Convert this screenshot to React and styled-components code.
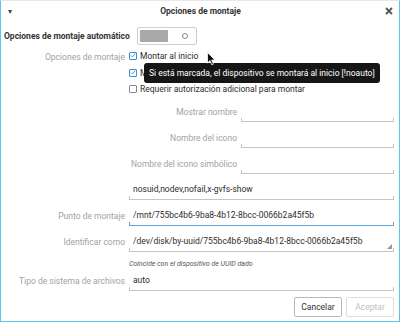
import React from "react";
import styled, { createGlobalStyle } from "styled-components";

const Global = createGlobalStyle`
  html, body { margin: 0; padding: 0; background: #fff; }
  body { font-family: Roboto, "Noto Sans", sans-serif; }
  * { box-sizing: border-box; }
`;

function CheckBox({ checked }) {
  return (
    <Box $checked={checked}>
      {checked && (
        <svg width="9" height="9" viewBox="0 0 9 9">
          <path d="M1.5 4.5 L3.7 6.7 L8 1.5" fill="none" stroke="#3d8fd8" strokeWidth="1.4" />
        </svg>
      )}
    </Box>
  );
}

function Entry({ value, focused, handle }) {
  return (
    <EntryBox $focused={focused}>
      <EntryText>{value}</EntryText>
      {handle && (
        <Handle width="5" height="5" viewBox="0 0 5 5">
          <path d="M5 0 L5 5 L0 5 Z" fill="#999" />
        </Handle>
      )}
    </EntryBox>
  );
}

function App() {
  return (
    <>
      <Global />
      <Window>
        <TitleBar>
          <Menu>▾</Menu>
          <Title>Opciones de montaje</Title>
          <Close>
            <svg width="8" height="8" viewBox="0 0 8 8">
              <path d="M1 1 L7 7 M7 1 L1 7" stroke="#555" strokeWidth="1.8" />
            </svg>
          </Close>
        </TitleBar>
        <Content>
          <Header>
            <HeaderLabel>Opciones de montaje automático</HeaderLabel>
            <Switch>
              <SwitchFill />
              <SwitchKnob />
            </Switch>
          </Header>

          <Form>
            <Label $top>Opciones de montaje</Label>
            <Checks>
              <CheckRow>
                <CheckBox checked />
                <span>Montar al inicio</span>
              </CheckRow>
              <CheckRow>
                <CheckBox checked />
                <span>Mostrar en la interfaz de usuario</span>
              </CheckRow>
              <CheckRow>
                <CheckBox />
                <span>Requerir autorización adicional para montar</span>
              </CheckRow>
            </Checks>

            <span />
            <SubForm>
              <Label>Mostrar nombre</Label>
              <Entry />
              <Label>Nombre del icono</Label>
              <Entry />
              <Label>Nombre del icono simbólico</Label>
              <Entry />
            </SubForm>

            <span />
            <Entry value="nosuid,nodev,nofail,x-gvfs-show" />

            <Label>Punto de montaje</Label>
            <Entry value="/mnt/755bc4b6-9ba8-4b12-8bcc-0066b2a45f5b" focused />

            <Label>Identificar como</Label>
            <Entry value="/dev/disk/by-uuid/755bc4b6-9ba8-4b12-8bcc-0066b2a45f5b" handle />

            <span />
            <Hint>Coincide con el dispositivo de UUID dado</Hint>

            <Label>Tipo de sistema de archivos</Label>
            <Entry value="auto" />
          </Form>

          <Buttons>
            <Button>Cancelar</Button>
            <Button disabled>Aceptar</Button>
          </Buttons>
        </Content>

        <Tooltip>Si está marcada, el dispositivo se montará al inicio [!noauto]</Tooltip>
        <Cursor width="9" height="14" viewBox="0 0 9 14">
          <path d="M0.5 0.5 L0.5 11 L3 8.6 L4.8 12.8 L6.4 12.1 L4.7 8 L8 8 Z" fill="#111" stroke="#fff" strokeWidth="0.8" />
        </Cursor>
      </Window>
    </>
  );
}

export default App;

const Window = styled.div`
  position: relative;
  width: 400px;
  height: 322px;
  border: 1px solid #5ec6ee;
  border-top-color: #e8e8e8;
  background: #fff;
  color: #2e2e2e;
  font-size: 8.5px;
  overflow: hidden;
`;

const TitleBar = styled.div`
  height: 20px;
  display: flex;
  align-items: center;
  justify-content: space-between;
  padding: 0 6px 0 7px;
`;

const Menu = styled.span`
  font-size: 8px;
  color: #444;
  width: 10px;
`;

const Title = styled.span`
  font-weight: bold;
  font-size: 8.5px;
  color: #333;
`;

const Close = styled.span`
  width: 10px;
  display: flex;
  justify-content: flex-end;
`;

const Content = styled.div`
  padding: 6px 5px 0 3px;
`;

const Header = styled.div`
  display: flex;
  align-items: center;
  gap: 7px;
  height: 18px;
`;

const HeaderLabel = styled.span`
  font-weight: bold;
  font-size: 8.5px;
  color: #333;
`;

const Switch = styled.div`
  width: 60px;
  height: 18px;
  border: 1px solid #cfcfcf;
  border-radius: 2px;
  display: flex;
  align-items: center;
  padding: 2px;
`;

const SwitchFill = styled.div`
  width: 28px;
  height: 12px;
  background: #a9a9a9;
  border-radius: 1px;
`;

const SwitchKnob = styled.div`
  width: 6px;
  height: 6px;
  border: 1px solid #888;
  border-radius: 50%;
  margin-left: 14px;
`;

const Form = styled.div`
  display: grid;
  grid-template-columns: 121px 1fr;
  column-gap: 4px;
  row-gap: 6px;
  margin-top: 5px;
  align-items: center;
`;

const Label = styled.span`
  text-align: right;
  color: #a2a2a2;
  font-size: 8.5px;
  white-space: nowrap;
  align-self: ${(p) => (p.$top ? "start" : "center")};
  margin-top: ${(p) => (p.$top ? "2px" : "0")};
`;

const Checks = styled.div`
  display: flex;
  flex-direction: column;
  gap: 4px;
`;

const CheckRow = styled.div`
  display: flex;
  align-items: center;
  gap: 3px;
  height: 12.5px;
  font-size: 8.5px;
  color: #2e2e2e;
`;

const Box = styled.span`
  width: 8px;
  height: 8px;
  border: 1px solid ${(p) => (p.$checked ? "#3d8fd8" : "#8a8a8a")};
  border-radius: 1px;
  display: flex;
  align-items: center;
  justify-content: center;
  svg { margin-top: -1px; }
`;

const SubForm = styled.div`
  display: grid;
  grid-template-columns: 108px 1fr;
  column-gap: 4px;
  row-gap: 6px;
  align-items: center;
`;

const EntryBox = styled.div`
  position: relative;
  height: 20px;
  display: flex;
  align-items: center;
  padding: 0 4px;
  border-bottom: 1px solid ${(p) => (p.$focused ? "#5ea6e0" : "#c4c4c4")};
  &::before, &::after {
    content: "";
    position: absolute;
    bottom: 0;
    width: 1px;
    height: 3px;
    background: ${(p) => (p.$focused ? "#5ea6e0" : "#c4c4c4")};
  }
  &::before { left: 0; }
  &::after { right: 0; }
`;

const EntryText = styled.span`
  font-size: 8.5px;
  color: #2e2e2e;
  white-space: nowrap;
`;

const Handle = styled.svg`
  position: absolute;
  right: 2px;
  bottom: 2px;
`;

const Hint = styled.span`
  font-size: 7px;
  font-style: italic;
  color: #555;
  margin-top: 2px;
  margin-bottom: -3px;
`;

const Buttons = styled.div`
  display: flex;
  justify-content: flex-end;
  gap: 4px;
  margin-top: 6px;
`;

const Button = styled.button`
  width: 48px;
  height: 20px;
  font-family: Roboto, "Noto Sans", sans-serif;
  font-size: 8.5px;
  background: #fff;
  border: 1px solid ${(p) => (p.disabled ? "#dedede" : "#b8b8b8")};
  border-radius: 2px;
  color: ${(p) => (p.disabled ? "#c0c0c0" : "#333")};
  padding: 0;
`;

const Tooltip = styled.div`
  position: absolute;
  left: 143px;
  top: 62px;
  height: 20px;
  padding: 0 5px;
  display: flex;
  align-items: center;
  background: #161616;
  color: #fff;
  border-radius: 3px;
  font-size: 8.5px;
  white-space: nowrap;
`;

const Cursor = styled.svg`
  position: absolute;
  left: 206px;
  top: 51px;
`;
